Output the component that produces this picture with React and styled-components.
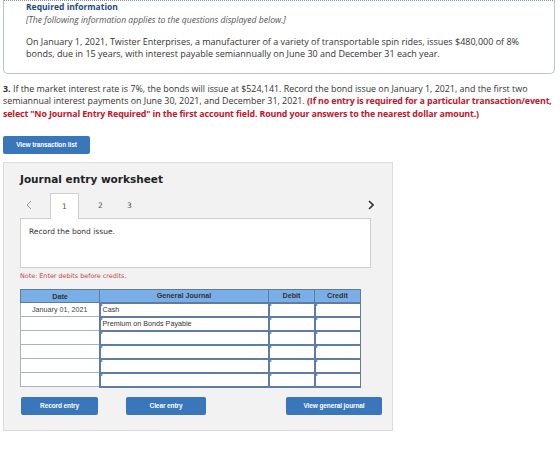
import React from 'react';
import styled, { createGlobalStyle, css } from 'styled-components';

const GlobalStyle = createGlobalStyle`
  body {
    margin: 0;
    background: #fff;
    font-family: "Open Sans", "Liberation Sans", sans-serif;
  }
`;

const Page = styled.div`
  padding: 0 5px 0 3px;
`;

const InfoBox = styled.div`
  height: 74px;
  box-sizing: border-box;
  border: 1px solid #b9c4d2;
  border-top: 1px dotted #7f8fa6;
  border-radius: 0 0 5px 5px;
  padding: 0 22px 0 22px;
  color: #333;
`;

const InfoTitle = styled.div`
  font-size: 8.5px;
  line-height: 11px;
  font-weight: 700;
  color: #254b7d;
`;

const InfoHint = styled.div`
  margin-top: 3px;
  font-size: 8.6px;
  line-height: 11px;
  font-style: italic;
  color: #555;
`;

const InfoText = styled.div`
  margin-top: 10px;
  font-size: 9px;
`;

const Question = styled.div`
  margin-top: 9px;
  font-size: 8.9px;
  color: #333;
`;

const Line = styled.div`
  line-height: 12.3px;
  white-space: nowrap;
`;

const Alert = styled.b`
  color: #c0162c;
  letter-spacing: -0.15px;
`;

const BlueButton = styled.button`
  display: block;
  height: 18px;
  width: ${p => p.$w}px;
  padding: 0;
  border: none;
  border-radius: 2px;
  background: #3a76ba;
  color: #fff;
  font-family: "Liberation Sans", Arial, sans-serif;
  font-size: 6.5px;
  font-weight: 700;
  letter-spacing: -0.1px;
`;

const TopButton = styled(BlueButton)`
  margin-top: 16px;
`;

const Worksheet = styled.div`
  margin-top: 8px;
  width: 390px;
  box-sizing: border-box;
  background: #f2f2f2;
  border: 1px solid #dcdcdc;
  padding: 10px 10px 15px 16px;
  font-family: "DejaVu Sans", Verdana, sans-serif;
`;

const Title = styled.div`
  font-size: 10.5px;
  font-weight: 700;
  line-height: 13px;
  color: #222;
`;

const TabRow = styled.div`
  display: flex;
  align-items: stretch;
  height: 25px;
  margin-top: 7px;
  position: relative;
  z-index: 1;
`;

const Arrow = styled.div`
  display: flex;
  align-items: center;
  justify-content: center;
  width: ${p => p.$w}px;
  ${p => p.$right && css`margin-left: auto;`}
`;

const Tab = styled.div`
  width: 29px;
  display: flex;
  align-items: center;
  justify-content: center;
  font-size: 7.5px;
  color: #555;
  box-sizing: border-box;
  ${p =>
    p.$active &&
    css`
      background: #fff;
      border: 1px solid #cfcfcf;
      border-bottom: none;
      margin-bottom: -1px;
    `}
`;

const PromptBox = styled.div`
  width: 351px;
  height: 50px;
  box-sizing: border-box;
  background: #fff;
  border: 1px solid #cfcfcf;
  padding: 8px 8px;
  font-size: 7.5px;
  color: #333;
`;

const Note = styled.div`
  margin-top: 4px;
  font-size: 6.4px;
  line-height: 8px;
  color: #c24646;
`;

const Table = styled.table`
  margin-top: 9px;
  width: 336px;
  border-collapse: collapse;
  font-family: "Liberation Sans", Arial, sans-serif;
  font-size: 7.2px;
  color: #333;
  table-layout: fixed;
`;

const Th = styled.th`
  height: 12px;
  padding: 0;
  background: #7aaee6;
  border: 1.5px solid #5d7c9f;
  font-weight: 700;
  font-size: 7.2px;
  color: #333;
  width: ${p => p.$w}px;
`;

const DateCell = styled.td`
  height: 12px;
  padding: 0;
  background: #fff;
  border: 1px solid #a9b3bf;
  text-align: center;
  color: #444;
`;

const InputCell = styled.td`
  position: relative;
  height: 12px;
  padding: 0 0 0 2px;
  background: #fff;
  border: 2px solid #5f7da3;
  border-right-width: 1px;
  white-space: nowrap;
  overflow: hidden;

  &::before {
    content: '';
    position: absolute;
    left: 0;
    top: 0;
    border-top: 1.5px solid transparent;
    border-bottom: 1.5px solid transparent;
    border-left: 2.5px solid #2f6fc4;
  }
`;

const Footer = styled.div`
  display: flex;
  margin-top: 9px;
  padding-left: 1px;
`;

const Spacer = styled.div`
  width: ${p => p.$w}px;
  ${p => p.$grow && css`flex: 1;`}
`;

const ChevronLeft = () => (
  <svg width="6" height="10" viewBox="0 0 6 10">
    <path d="M5 1 L1 5 L5 9" fill="none" stroke="#999" strokeWidth="1" />
  </svg>
);

const ChevronRight = () => (
  <svg width="6" height="10" viewBox="0 0 6 10">
    <path d="M1 1 L5 5 L1 9" fill="none" stroke="#333" strokeWidth="1.6" />
  </svg>
);

const rows = [
  { date: 'January 01, 2021', account: 'Cash' },
  { date: '', account: 'Premium on Bonds Payable' },
  { date: '', account: '' },
  { date: '', account: '' },
  { date: '', account: '' },
  { date: '', account: '' },
];

const App = () => {
  return (
    <Page>
      <GlobalStyle />
      <InfoBox>
        <InfoTitle>Required information</InfoTitle>
        <InfoHint>[The following information applies to the questions displayed below.]</InfoHint>
        <InfoText>
          <Line>
            On January 1, 2021, Twister Enterprises, a manufacturer of a variety of transportable spin rides, issues $480,000 of 8%
          </Line>
          <Line>bonds, due in 15 years, with interest payable semiannually on June 30 and December 31 each year.</Line>
        </InfoText>
      </InfoBox>

      <Question>
        <Line>
          <b>3.</b> If the market interest rate is 7%, the bonds will issue at $524,141. Record the bond issue on January 1, 2021, and the first two
        </Line>
        <Line>
          semiannual interest payments on June 30, 2021, and December 31, 2021.{' '}
          <Alert>(If no entry is required for a particular transaction/event,</Alert>
        </Line>
        <Line>
          <Alert>
            select "No Journal Entry Required" in the first account field. Round your answers to the nearest dollar amount.)
          </Alert>
        </Line>
      </Question>

      <TopButton $w={87}>View transaction list</TopButton>

      <Worksheet>
        <Title>Journal entry worksheet</Title>
        <TabRow>
          <Arrow $w={18}>
            <ChevronLeft />
          </Arrow>
          <Spacer $w={12} />
          <Tab $active>1</Tab>
          <Spacer $w={7} />
          <Tab>2</Tab>
          <Tab>3</Tab>
          <Arrow $w={22} $right>
            <ChevronRight />
          </Arrow>
        </TabRow>
        <PromptBox>Record the bond issue.</PromptBox>
        <Note>Note: Enter debits before credits.</Note>

        <Table>
          <thead>
            <tr>
              <Th $w={78}>Date</Th>
              <Th $w={168}>General Journal</Th>
              <Th $w={45}>Debit</Th>
              <Th $w={45}>Credit</Th>
            </tr>
          </thead>
          <tbody>
            {rows.map((row, i) => (
              <tr key={i}>
                <DateCell>{row.date}</DateCell>
                <InputCell>{row.account}</InputCell>
                <InputCell />
                <InputCell />
              </tr>
            ))}
          </tbody>
        </Table>

        <Footer>
          <BlueButton $w={77}>Record entry</BlueButton>
          <Spacer $w={28} />
          <BlueButton $w={80}>Clear entry</BlueButton>
          <Spacer $grow />
          <BlueButton $w={96}>View general journal</BlueButton>
        </Footer>
      </Worksheet>
    </Page>
  );
};

export default App;
